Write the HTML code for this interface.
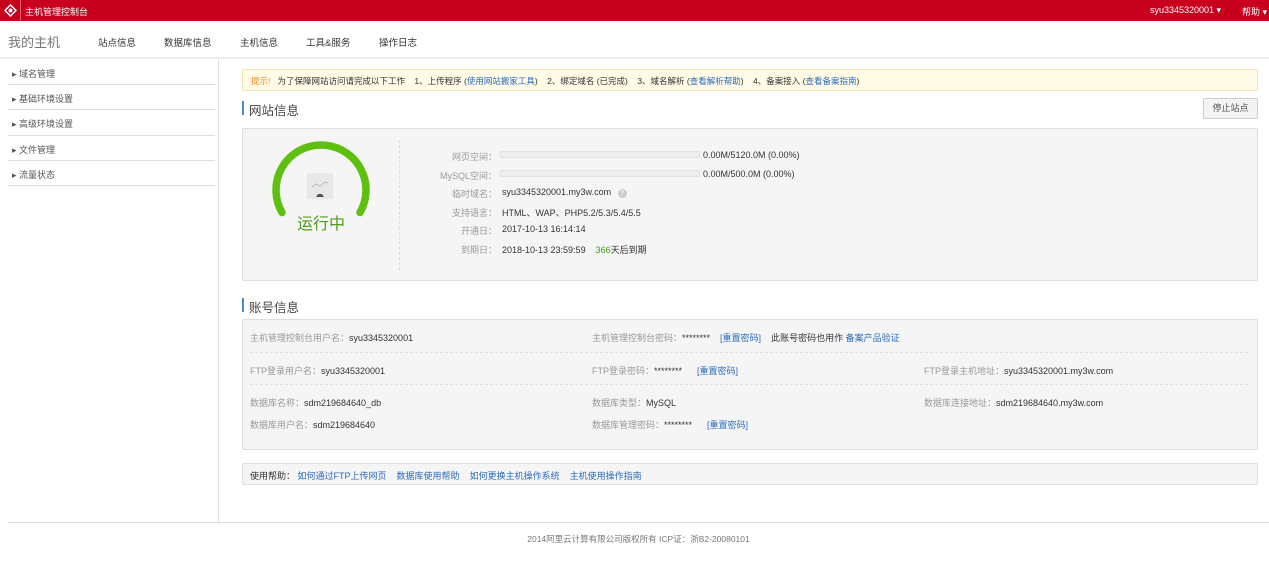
<!DOCTYPE html>
<html><head><meta charset="utf-8"><style>
*{margin:0;padding:0;box-sizing:border-box}
body{width:1269px;height:562px;background:#fff;font-family:"Liberation Sans","Noto Sans CJK SC",sans-serif;font-size:9px;color:#333;position:relative;overflow:hidden}
.a{position:absolute;white-space:nowrap}
a{color:#2a6bbf;text-decoration:none}
.g{color:#999}
</style></head><body>
<div class="a" style="left:0;top:0;width:1269px;height:21px;background:#c8001e"></div>
<div class="a" style="left:20px;top:0;width:1px;height:21px;background:#e0606f"></div>
<svg class="a" style="left:4px;top:4px" width="13" height="13" viewBox="0 0 13 13"><path d="M6.5 1L12 6.5 6.5 12 1 6.5Z" fill="none" stroke="#fff" stroke-width="1.5"/><circle cx="6.5" cy="6.5" r="2" fill="#fff"/></svg>
<div class="a" style="left:25px;top:5px;color:#fff;font-size:9px">主机管理控制台</div>
<div class="a" style="left:1150px;top:5px;color:#fff;font-size:9px">syu3345320001 ▾</div>
<div class="a" style="left:1242px;top:5px;color:#fff;font-size:9px">帮助 ▾</div>

<div class="a" style="left:0;top:57px;width:1269px;height:2px;background:#eee"></div>
<div class="a" style="left:8px;top:32px;font-size:13px;color:#777">我的主机</div>
<div class="a" style="left:98px;top:35px;font-size:9.5px">站点信息</div>
<div class="a" style="left:164px;top:35px;font-size:9.5px">数据库信息</div>
<div class="a" style="left:240px;top:35px;font-size:9.5px">主机信息</div>
<div class="a" style="left:306px;top:35px;font-size:9.5px">工具&amp;服务</div>
<div class="a" style="left:379px;top:35px;font-size:9.5px">操作日志</div>

<div class="a" style="left:218px;top:59px;width:1px;height:463px;background:#ddd"></div>
<div class="a" style="left:12px;top:67px;color:#555">▸ 域名管理</div>
<div class="a" style="left:12px;top:92px;color:#555">▸ 基础环境设置</div>
<div class="a" style="left:12px;top:117px;color:#555">▸ 高级环境设置</div>
<div class="a" style="left:12px;top:143px;color:#555">▸ 文件管理</div>
<div class="a" style="left:12px;top:168px;color:#555">▸ 流量状态</div>
<div class="a" style="left:8px;top:84px;width:207px;height:1px;background:#ddd"></div>
<div class="a" style="left:8px;top:109px;width:207px;height:1px;background:#ddd"></div>
<div class="a" style="left:8px;top:135px;width:207px;height:1px;background:#ddd"></div>
<div class="a" style="left:8px;top:160px;width:207px;height:1px;background:#ddd"></div>
<div class="a" style="left:8px;top:185px;width:207px;height:1px;background:#ddd"></div>

<div class="a" style="left:242px;top:69px;width:1016px;height:22px;background:#fffbe6;border:1px solid #f5e3b0;border-radius:2px"></div>
<div class="a" style="left:251px;top:75px;font-size:8.5px"><span style="color:#f08a24">提示!</span>&nbsp;&nbsp;&nbsp;为了保障网站访问请完成以下工作&nbsp;&nbsp;&nbsp;&nbsp;1、上传程序 (<a>使用网站搬家工具</a>)&nbsp;&nbsp;&nbsp;&nbsp;2、绑定域名 (已完成)&nbsp;&nbsp;&nbsp;&nbsp;3、域名解析 (<a>查看解析帮助</a>)&nbsp;&nbsp;&nbsp;&nbsp;4、备案接入 (<a>查看备案指南</a>)</div>

<div class="a" style="left:242px;top:101px;width:2px;height:14px;background:#4a8ad0"></div>
<div class="a" style="left:249px;top:100px;font-size:12.5px;color:#444">网站信息</div>
<div class="a" style="left:1203px;top:98px;width:55px;height:21px;border:1px solid #ccc;background:#f3f3f3;border-radius:2px;text-align:center;line-height:19px;color:#555">停止站点</div>

<div class="a" style="left:242px;top:128px;width:1016px;height:153px;background:#f5f5f5;border:1px solid #ddd;border-radius:2px"></div>
<div class="a" style="left:399px;top:140px;width:0;height:130px;border-left:1px dashed #ddd"></div>
<svg class="a" style="left:270px;top:140px" width="102" height="80" viewBox="0 0 102 80"><path d="M12 72.5 A45 45 0 1 1 90 72.5" fill="none" stroke="#5dbf0f" stroke-width="7.5" stroke-linecap="round"/></svg>
<div class="a" style="left:307px;top:173px;width:26px;height:26px;background:#e8e8e8"></div>
<svg class="a" style="left:309px;top:177px" width="22" height="22"><path d="M3 10l4-3 4 2 5-4 3 1" stroke="#bbb" fill="none"/><path d="M7 20h8l-2-3h-4z" fill="#555"/></svg>
<div class="a" style="left:297px;top:210px;font-size:16px;color:#4e9a1e">运行中</div>

<div class="a" style="left:400px;top:150px;width:97px;text-align:right;color:#999">网页空间：</div>
<div class="a" style="left:500px;top:151px;width:200px;height:7px;background:#eee;border:1px solid #e2e2e2"></div>
<div class="a" style="left:703px;top:150px">0.00M/5120.0M (0.00%)</div>
<div class="a" style="left:400px;top:169px;width:97px;text-align:right;color:#999">MySQL空间：</div>
<div class="a" style="left:500px;top:170px;width:200px;height:7px;background:#eee;border:1px solid #e2e2e2"></div>
<div class="a" style="left:703px;top:169px">0.00M/500.0M (0.00%)</div>
<div class="a" style="left:400px;top:187px;width:97px;text-align:right;color:#999">临时域名：</div>
<div class="a" style="left:502px;top:187px">syu3345320001.my3w.com <span style="display:inline-block;width:9px;height:9px;border-radius:50%;background:#ccc;color:#fff;font-size:7px;text-align:center;line-height:9px;margin-left:4px">?</span></div>
<div class="a" style="left:400px;top:206px;width:97px;text-align:right;color:#999">支持语言：</div>
<div class="a" style="left:502px;top:206px">HTML、WAP、PHP5.2/5.3/5.4/5.5</div>
<div class="a" style="left:400px;top:224px;width:97px;text-align:right;color:#999">开通日：</div>
<div class="a" style="left:502px;top:224px">2017-10-13 16:14:14</div>
<div class="a" style="left:400px;top:243px;width:97px;text-align:right;color:#999">到期日：</div>
<div class="a" style="left:502px;top:243px">2018-10-13 23:59:59&nbsp;&nbsp;&nbsp;&nbsp;<span style="color:#3a9a1a">366</span>天后到期</div>

<div class="a" style="left:242px;top:298px;width:2px;height:14px;background:#4a8ad0"></div>
<div class="a" style="left:249px;top:297px;font-size:12.5px;color:#444">账号信息</div>
<div class="a" style="left:242px;top:319px;width:1016px;height:131px;background:#f5f5f5;border:1px solid #ddd;border-radius:2px"></div>
<div class="a" style="left:250px;top:352px;width:998px;border-top:1px dashed #e0e0e0"></div>
<div class="a" style="left:250px;top:384px;width:998px;border-top:1px dashed #e0e0e0"></div>
<div class="a" style="left:250px;top:331px"><span class="g">主机管理控制台用户名：</span>syu3345320001</div>
<div class="a" style="left:592px;top:331px"><span class="g">主机管理控制台密码：</span>********&nbsp;&nbsp;&nbsp;&nbsp;<a>[重置密码]</a>&nbsp;&nbsp;&nbsp;&nbsp;此账号密码也用作 <a>备案产品验证</a></div>
<div class="a" style="left:250px;top:364px"><span class="g">FTP登录用户名：</span>syu3345320001</div>
<div class="a" style="left:592px;top:364px"><span class="g">FTP登录密码：</span>********&nbsp;&nbsp;&nbsp;&nbsp;&nbsp;&nbsp;<a>[重置密码]</a></div>
<div class="a" style="left:924px;top:364px"><span class="g">FTP登录主机地址：</span>syu3345320001.my3w.com</div>
<div class="a" style="left:250px;top:396px"><span class="g">数据库名称：</span>sdm219684640_db</div>
<div class="a" style="left:592px;top:396px"><span class="g">数据库类型：</span>MySQL</div>
<div class="a" style="left:924px;top:396px"><span class="g">数据库连接地址：</span>sdm219684640.my3w.com</div>
<div class="a" style="left:250px;top:418px"><span class="g">数据库用户名：</span>sdm219684640</div>
<div class="a" style="left:592px;top:418px"><span class="g">数据库管理密码：</span>********&nbsp;&nbsp;&nbsp;&nbsp;&nbsp;&nbsp;<a>[重置密码]</a></div>

<div class="a" style="left:242px;top:463px;width:1016px;height:22px;background:#f5f5f5;border:1px solid #ddd;border-radius:2px"></div>
<div class="a" style="left:250px;top:469px">使用帮助：&nbsp;<a>如何通过FTP上传网页</a>&nbsp;&nbsp;&nbsp;&nbsp;<a>数据库使用帮助</a>&nbsp;&nbsp;&nbsp;&nbsp;<a>如何更换主机操作系统</a>&nbsp;&nbsp;&nbsp;&nbsp;<a>主机使用操作指南</a></div>

<div class="a" style="left:8px;top:522px;width:1261px;height:1px;background:#ddd"></div>
<div class="a" style="left:0;top:533px;width:1277px;text-align:center;color:#777;font-size:8.5px">2014阿里云计算有限公司版权所有 ICP证：浙B2-20080101</div>
</body></html>
